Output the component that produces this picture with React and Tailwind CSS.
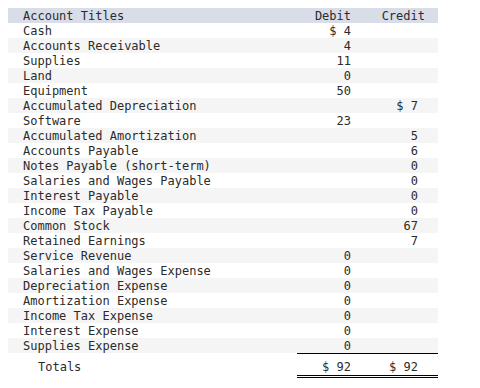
import React from "react";

const rows = [
  ["Cash", "$ 4", ""],
  ["Accounts Receivable", "4", ""],
  ["Supplies", "11", ""],
  ["Land", "0", ""],
  ["Equipment", "50", ""],
  ["Accumulated Depreciation", "", "$ 7"],
  ["Software", "23", ""],
  ["Accumulated Amortization", "", "5"],
  ["Accounts Payable", "", "6"],
  ["Notes Payable (short-term)", "", "0"],
  ["Salaries and Wages Payable", "", "0"],
  ["Interest Payable", "", "0"],
  ["Income Tax Payable", "", "0"],
  ["Common Stock", "", "67"],
  ["Retained Earnings", "", "7"],
  ["Service Revenue", "0", ""],
  ["Salaries and Wages Expense", "0", ""],
  ["Depreciation Expense", "0", ""],
  ["Amortization Expense", "0", ""],
  ["Income Tax Expense", "0", ""],
  ["Interest Expense", "0", ""],
  ["Supplies Expense", "0", ""],
];

export default function App() {
  return (
    <div
      className="w-[480px] h-[388px] bg-white text-[#2b2b2b] text-[12px] pt-[8px] pl-[8px]"
      style={{ fontFamily: '"DejaVu Sans Mono", "Liberation Mono", monospace' }}
    >
      <div className="w-[430px]">
        <div className="flex h-[15px] leading-[14px] pt-[1px] bg-[#d9dde7] whitespace-pre">
          <div className="w-[289px] pl-[15px]">Account Titles</div>
          <div className="w-[68px] pr-[14px] text-right">Debit</div>
          <div className="w-[73px] pr-[13px] text-right">Credit</div>
        </div>
        {rows.map(([t, d, c], i) => (
          <div
            key={t}
            className={`flex h-[15px] leading-[14px] pt-[1px] whitespace-pre ${i % 2 === 1 ? "bg-[#f5f5f5]" : "bg-white"}`}
          >
            <div className="w-[289px] pl-[15px]">{t}</div>
            <div className="w-[68px] pr-[14px] text-right">{d}</div>
            <div className="w-[73px] pr-[20px] text-right">{c}</div>
          </div>
        ))}
        <div className="flex whitespace-pre">
          <div className="w-[289px] pl-[30px] h-[25px] pt-[7px] leading-[15px]">Totals</div>
          <div className="flex border-t border-black border-b-[3px] border-b-black [border-bottom-style:double]">
            <div className="w-[68px] pr-[14px] text-right h-[21px] leading-[15px] pt-[6px]">$ 92</div>
            <div className="w-[73px] pr-[20px] text-right h-[21px] leading-[15px] pt-[6px]">$ 92</div>
          </div>
        </div>
      </div>
    </div>
  );
}
